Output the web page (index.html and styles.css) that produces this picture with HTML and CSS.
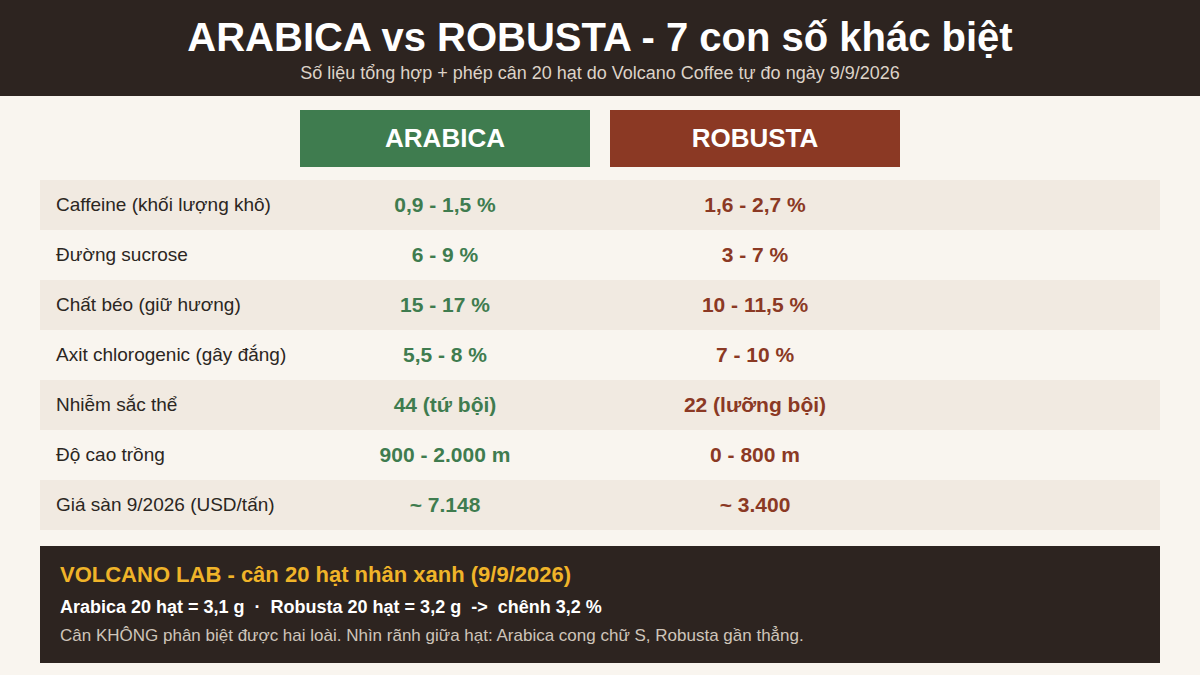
FILE: index.html
```html
<!DOCTYPE html>
<html lang="vi">
<head>
<meta charset="utf-8">
<link rel="stylesheet" href="styles.css">
</head>
<body>
<header class="hero">
  <h1 class="hero-title">ARABICA vs ROBUSTA - 7 con số khác biệt</h1>
  <p class="hero-sub">Số liệu tổng hợp + phép cân 20 hạt do Volcano Coffee tự đo ngày 9/9/2026</p>
</header>
<main class="content">
  <div class="heads">
    <div class="head-spacer"></div>
    <div class="head head-ara">ARABICA</div>
    <div class="head head-rob">ROBUSTA</div>
  </div>
  <div class="table">
    <div class="row alt"><span class="label">Caffeine (khối lượng khô)</span><span class="val ara">0,9 - 1,5 %</span><span class="val rob">1,6 - 2,7 %</span></div>
    <div class="row"><span class="label">Đường sucrose</span><span class="val ara">6 - 9 %</span><span class="val rob">3 - 7 %</span></div>
    <div class="row alt"><span class="label">Chất béo (giữ hương)</span><span class="val ara">15 - 17 %</span><span class="val rob">10 - 11,5 %</span></div>
    <div class="row"><span class="label">Axit chlorogenic (gây đắng)</span><span class="val ara">5,5 - 8 %</span><span class="val rob">7 - 10 %</span></div>
    <div class="row alt"><span class="label">Nhiễm sắc thể</span><span class="val ara">44 (tứ bội)</span><span class="val rob">22 (lưỡng bội)</span></div>
    <div class="row"><span class="label">Độ cao trồng</span><span class="val ara">900 - 2.000 m</span><span class="val rob">0 - 800 m</span></div>
    <div class="row alt"><span class="label">Giá sàn 9/2026 (USD/tấn)</span><span class="val ara">~ 7.148</span><span class="val rob">~ 3.400</span></div>
  </div>
  <section class="lab">
    <h2 class="lab-title">VOLCANO LAB - cân 20 hạt nhân xanh (9/9/2026)</h2>
    <p class="lab-main">Arabica 20 hạt = 3,1 g &nbsp;·&nbsp; Robusta 20 hạt = 3,2 g &nbsp;-&gt;&nbsp; chênh 3,2 %</p>
    <p class="lab-note">Cân KHÔNG phân biệt được hai loài. Nhìn rãnh giữa hạt: Arabica cong chữ S, Robusta gần thẳng.</p>
  </section>
</main>
</body>
</html>
```

FILE: styles.css
```css
* { box-sizing: border-box; }
html, body { margin: 0; padding: 0; }
body {
  width: 1200px;
  height: 675px;
  overflow: hidden;
  background: #f9f5ef;
  font-family: "Liberation Sans", Arial, sans-serif;
  color: #2b2622;
}
.hero {
  background: #2d2420;
  height: 96px;
  padding-top: 14px;
  text-align: center;
}
.hero-title {
  margin: 0;
  font-size: 40px;
  line-height: 46px;
  font-weight: 700;
  color: #ffffff;
}
.hero-sub {
  margin: 2px 0 0;
  font-size: 18px;
  line-height: 22px;
  color: #ddd3c8;
}
.content {
  padding: 14px 40px 0;
}
.heads {
  display: flex;
  height: 57px;
}
.head-spacer { width: 260px; }
.head {
  width: 290px;
  display: flex;
  align-items: center;
  justify-content: center;
  color: #fff;
  font-weight: 700;
  font-size: 26px;
}
.head-ara { background: #3f7c4f; margin-right: 20px; }
.head-rob { background: #8b3924; }
.table {
  margin-top: 13px;
}
.row {
  display: flex;
  align-items: center;
  height: 50px;
}
.row.alt { background: #f1eae1; }
.label {
  width: 260px;
  padding-left: 16px;
  font-size: 19px;
  color: #2b2622;
}
.val {
  width: 290px;
  text-align: center;
  font-weight: 700;
  font-size: 21px;
}
.val.ara { color: #3f7c4f; margin-right: 20px; }
.val.rob { color: #8b3924; }
.lab {
  margin-top: 16px;
  background: #2d2420;
  height: 117px;
  padding: 15px 20px 0;
}
.lab-title {
  margin: 0;
  font-size: 22px;
  line-height: 28px;
  font-weight: 700;
  color: #f0b429;
}
.lab-main {
  margin: 7px 0 0;
  font-size: 18px;
  line-height: 22px;
  font-weight: 700;
  color: #ffffff;
}
.lab-note {
  margin: 8px 0 0;
  font-size: 17px;
  line-height: 20px;
  color: #cfc5ba;
}
```
